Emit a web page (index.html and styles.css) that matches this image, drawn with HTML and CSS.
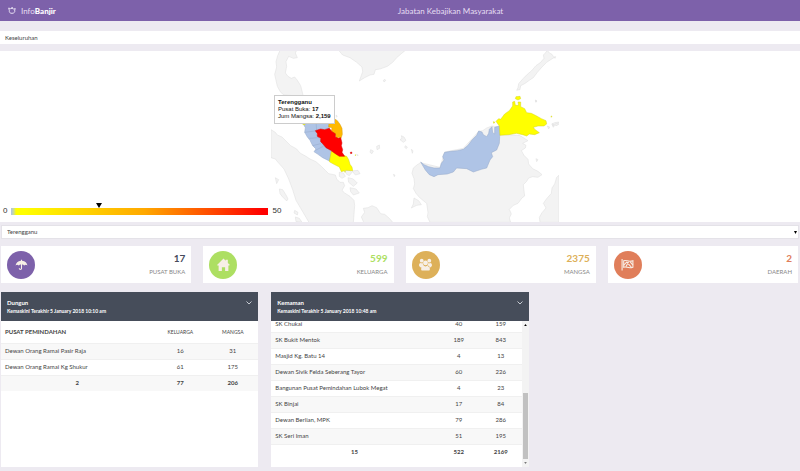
FILE: index.html
```html
<!DOCTYPE html>
<html lang="ms">
<head>
<meta charset="utf-8">
<meta name="viewport" content="width=device-width, initial-scale=1">
<title>InfoBanjir</title>
<link rel="stylesheet" href="styles.css">
</head>
<body>
<header class="topbar">
  <a class="brand" href="#">
    <svg class="brand-icon" viewBox="0 0 24 21" fill="none" stroke="currentColor" stroke-width="3" stroke-linejoin="round"><path d="M2 3l5 2c3-1 7-1 10 1l5-1-2 4c2 6-2 10-8 10S3 16 4 10z"/><path d="M9 3l6-1"/></svg>
    <span>Info<b>Banjir</b></span>
  </a>
  <h1 class="agency">Jabatan Kebajikan Masyarakat</h1>
</header>
<main>
  <h2 class="section-title">Keseluruhan</h2>
  <section class="map-panel">
    <svg class="map" viewBox="271 51 288 171" role="img" aria-label="Peta Malaysia">
      <g class="land" transform="translate(260 45) scale(.33333)">
        <path d="M60 16L53 32 48 50 50 66 44 88 48 106 52 124 62 142 72 150 100 152 131 158 126 138 122 122 112 106 104 96 94 100 84 94 76 84 80 64 78 50 86 34 100 40 112 38 106 24 110 16z"/>
        <path d="M33 254L46 262 52 270 66 276 78 288 92 302 110 312 120 324 138 334 150 342 168 350 184 364 196 376 206 386 226 390 230 402 240 412 250 412 254 422 246 436 254 444 270 454 282 466 284 482 280 534 148 534 128 500 108 466 98 434 86 402 72 372 54 352 46 342 33 338z"/>
        <path d="M236 16L248 30 270 38 290 52 306 66 308 80 298 108 314 98 330 90 342 88 346 74 360 72 382 64 398 52 410 38 424 26 436 16z"/>
        <path d="M58 432L68 434 78 450 84 462 80 468 68 456 60 446zM46 398L56 404 50 416zM104 496L114 502 112 510 102 504zM106 516L118 520 126 532 108 530z"/>
        <path d="M254 378L266 374 276 382 268 392 260 388zM276 378L294 376 300 386 286 390zM238 382L250 384 256 394 246 400 238 394zM264 398L280 402 292 414 280 424 266 412zM270 428L288 432 298 444 280 450 272 440z"/>
        <path d="M312 534L304 516 314 502 310 490 324 488 336 482 350 488 362 506 374 508 388 520 400 534z"/>
        <path d="M332 314l8 4-4 8-6-4zM350 304l8-4 1 10-8 4zM424 272l8 4 6 10-8 6-10-8 6-4zM436 302l6 4-3 5-5-4z"/>
        <path d="M370 106l5-3 2 4-5 4zM400 388l5 2-2 5zM228 210l4 3-3 4zM290 328l5 2-3 3z"/>
      </g>
      <g class="land" transform="translate(410 80) scale(.33333)">
        <path d="M32 248L22 254 10 264 6 280 12 296 14 312 10 326 18 340 28 352 40 362 50 370 52 384 54 398 52 410 60 427 302 427 298 414 304 402 298 388 310 376 324 370 336 354 344 348 342 332 340 314 350 304 356 294 368 290 384 292 396 284 384 274 368 266 356 252 354 238 342 226 334 212 346 204 348 196 338 190 354 182 342 174 328 166 268 164 260 140 246 138 230 144 218 152 206 154 160 205 104 216 90 262z"/>
        <path d="M447 286L440 292 434 312 426 324 424 340 410 356 400 370 408 384 396 398 388 412 390 427H447z"/>
        <path d="M12 354L26 362 34 374 20 376 4 384 10 372zM4 208l5 4-2 8zM378 236l6 3-4 6zM376 60l5 3-3 4z"/>
        <path d="M412 138l7 3-3 6zM426 132l8-4 12-2-2 8-10 2-4 6z"/>
      </g>
      <g class="land" transform="translate(400 45) scale(.33333)">
        <path d="M442 16L436 24 430 30 432 40 422 52 408 62 394 78 382 88 370 100 356 116 354 128 350 136 360 134 362 122 374 116 388 106 400 98 412 82 426 66 440 52 452 44 462 38 456 28 448 24z"/>
        <path d="M456 236l6 3-3 5zM464 238l8-4 4 4-8 4zM406 166l5 2-4 3zM462 36l5-1-2 5z"/>
      </g>
      <g transform="translate(260 45) scale(.33333)">
        <path class="area-none" d="M126 230L136 248 134 262 142 276 150 286 158 302 168 312 162 320 174 328 188 338 208 348 214 334 218 320 210 312 196 306 186 294 180 282 172 272 166 258 190 254 208 250 206 238 206 228z"/>
        <path class="area-line" d="M168 230L170 256M134 262L166 258M148 280L176 278M158 302L182 296M166 316L190 304M208 348L216 318"/>
        <path class="area-low" d="M126 236L138 232 134 240zM214 318L208 350 222 358 238 366 244 380 258 376 278 377 276 366 270 358 266 344 260 334 244 330 230 324z"/>
        <path class="area-mid" d="M208 220L220 219 232 227 240 238 246 250 247 268 243 280 236 276 230 284 226 268 214 260 216 248 206 246z"/>
        <path class="area-high" d="M166 257L182 252 194 254 208 250 216 260 226 266 226 276 234 280 242 278 246 294 244 302 248 314 246 322 254 334 238 334 226 326 212 316 198 308 188 296 182 290 182 280 172 274 172 266zM271 322L275 321 276 325 272 326z"/>
        <path class="area-low" d="M254 379L256 379 255 382zM286 329L288 330 286 332z"/>
      </g>
      <g transform="translate(410 80) scale(.33333)">
        <path class="area-none" d="M32 246L42 254 56 260 72 264 90 264 94 250 102 240 98 230 104 217 122 214 142 212 160 208 174 196 186 180 200 166 206 153 216 156 220 164 230 170 236 160 238 148 246 140 248 158 254 162 254 142 268 138 269 170 268 190 260 210 244 218 248 230 240 240 230 264 214 268 190 276 170 266 140 264 130 276 112 282 84 284 72 290 58 284 46 270z"/>
        <path class="area-low" d="M258 124L266 116 272 118 284 102 298 92 308 78 308 66 314 64 316 76 326 76 324 66 332 66 332 80 344 86 350 98 364 100 380 108 394 116 408 122 410 132 402 138 384 138 370 142 374 148 388 158 374 164 358 162 350 168 338 164 320 160 296 164 270 166 268 138zM318 50L330 49 332 56 324 60 316 56zM250 125l5 2-4 3zM423 108l3 1-2 3z"/>
      </g>
    </svg>
    <div class="legend">
      <span>0</span>
      <span class="legend-bar"><svg class="legend-mark" viewBox="0 0 6 5"><path d="M0 0h6L3 5z"/></svg></span>
      <span>50</span>
    </div>
    <div class="map-tip"><b>Terengganu</b><br>Pusat Buka: <b>17</b><br>Jum Mangsa: <b>2,159</b></div>
  </section>

  <div class="state">
    <select class="state-select" aria-label="Negeri"><option>Terengganu</option></select>
    <svg class="state-arrow" viewBox="0 0 4 4"><path d="M0 0h4L2 4z"/></svg>
  </div>

  <section class="stats">
    <article class="stat violet">
      <span class="stat-icon"><svg viewBox="0 0 24 24" fill="currentColor"><path d="M11 3h2v2c6 .5 9 4 10 9-2-2-4-2-6 0-1-1-2-2-4-2v7c0 4-6 4-6 0h2c0 2 2 2 2 0v-7c-2 0-3 1-4 2-2-2-4-2-6 0C2 9 5 5.500 11 5z"/></svg></span>
      <div class="stat-text"><strong>17</strong><span>PUSAT BUKA</span></div>
    </article>
    <article class="stat green">
      <span class="stat-icon"><svg viewBox="0 0 24 24" fill="currentColor"><path d="M12 1l4 4V3h4v6l4 4-2 1h-1v10h-6v-7H9v7H3V14H1l-1-1z"/></svg></span>
      <div class="stat-text"><strong>599</strong><span>KELUARGA</span></div>
    </article>
    <article class="stat gold">
      <span class="stat-icon"><svg viewBox="0 0 24 24" fill="currentColor"><circle cx="5" cy="5" r="3.500"/><circle cx="19" cy="5" r="3.500"/><circle cx="12" cy="9" r="4.500"/><path d="M0 14c0-3 1-5 3-5 1 1 3 1 4 0 0 3 1 4 2 5l-4 3H2zM24 14c0-3-1-5-3-5-1 1-3 1-4 0 0 3-1 4-2 5l4 3h3zM4 21c0-4 1-7 4-7 2 2 6 2 8 0 3 0 4 3 4 7 0 1-1 2-2 2H6c-1 0-2-1-2-2z"/></svg></span>
      <div class="stat-text"><strong>2375</strong><span>MANGSA</span></div>
    </article>
    <article class="stat orange">
      <span class="stat-icon"><svg viewBox="0 0 24 24" fill="none" stroke="currentColor" stroke-width="2"><path d="M2 2v21M5 5c5-2 8 3 17 0v12c-9 3-12-2-17 0z"/><path d="M5 13l6-6M9 16l5-9M11 8l8 9M17 7l5 6"/></svg></span>
      <div class="stat-text"><strong>2</strong><span>DAERAH</span></div>
    </article>
  </section>

  <section class="districts">
    <article class="district">
      <header class="district-head">
        <div><h3>Dungun</h3><p>Kemaskini Terakhir 5 January 2018 10:10 am</p></div>
        <button class="toggle" aria-label="Tutup Dungun"><svg viewBox="0 0 6 4" fill="none" stroke="currentColor"><path d="M.5 .5L3 3 5.500 .5"/></svg></button>
      </header>
      <div class="district-body">
        <table class="centres">
          <colgroup><col><col class="col-family"><col class="col-victim"></colgroup>
          <thead><tr><th>PUSAT PEMINDAHAN</th><th>KELUARGA</th><th>MANGSA</th></tr></thead>
          <tbody>
            <tr class="shade"><td>Dewan Orang Ramai Pasir Raja</td><td>16</td><td>31</td></tr>
            <tr><td>Dewan Orang Ramai Kg Shukur</td><td>61</td><td>175</td></tr>
          </tbody>
          <tfoot><tr class="shade"><td>2</td><td>77</td><td>206</td></tr></tfoot>
        </table>
      </div>
    </article>
    <article class="district">
      <header class="district-head">
        <div><h3>Kemaman</h3><p>Kemaskini Terakhir 5 January 2018 10:48 am</p></div>
        <button class="toggle" aria-label="Tutup Kemaman"><svg viewBox="0 0 6 4" fill="none" stroke="currentColor"><path d="M.5 .5L3 3 5.500 .5"/></svg></button>
      </header>
      <div class="district-body scrolled">
        <div class="scroll-view">
          <table class="centres">
            <colgroup><col><col class="col-narrow"><col class="col-narrow"></colgroup>
            <tbody>
              <tr><td>SK Chukai</td><td>40</td><td>159</td></tr>
              <tr class="shade"><td>SK Bukit Mentok</td><td>189</td><td>843</td></tr>
              <tr><td>Masjid Kg. Batu 14</td><td>4</td><td>13</td></tr>
              <tr class="shade"><td>Dewan Sivik Felda Seberang Tayor</td><td>60</td><td>226</td></tr>
              <tr><td>Bangunan Pusat Pemindahan Lubok Megat</td><td>4</td><td>23</td></tr>
              <tr class="shade"><td>SK Binjai</td><td>17</td><td>84</td></tr>
              <tr><td>Dewan Berlian, MPK</td><td>79</td><td>286</td></tr>
              <tr class="shade"><td>SK Seri Iman</td><td>51</td><td>195</td></tr>
            </tbody>
            <tfoot><tr><td>15</td><td>522</td><td>2169</td></tr></tfoot>
          </table>
        </div>
        <div class="scrollbar">
          <svg viewBox="0 0 4 3"><path d="M0 3h4L2 0z"/></svg>
          <span class="scroll-track"><span class="scroll-thumb"></span></span>
          <svg viewBox="0 0 4 3"><path d="M0 0h4L2 3z" opacity=".5"/></svg>
        </div>
      </div>
    </article>
  </section>
</main>
</body>
</html>
```
FILE: styles.css
```css
* { box-sizing: border-box; }
body {
  margin: 0;
  background: #edeaf1;
  color: #444;
  font: 6px/10px Lato, "Liberation Sans", sans-serif;
}
h1, h2, h3, p { margin: 0; font-weight: 400; }

.topbar {
  display: grid;
  grid-template-columns: 1fr auto 1fr;
  align-items: center;
  height: 21px;
  padding: 0 8px;
  background: #7d61aa;
  color: #e6def2;
}
.brand {
  display: flex;
  align-items: center;
  gap: 5px;
  color: inherit;
  font-size: 8px;
  text-decoration: none;
}
.brand b { color: #fff; font-weight: 900; }
.brand-icon { width: 8px; height: 7px; }
.agency { padding-left: 101px; font-size: 8px; }

.section-title {
  height: 13px;
  margin: 10px 0 7px;
  padding-left: 5px;
  background: #fff;
  font-size: 6px;
  line-height: 14px;
}

.map-panel {
  position: relative;
  height: 171px;
  background: #fff;
  overflow: hidden;
  font-family: "Liberation Sans", sans-serif;
}
.map { display: block; width: 288px; height: 171px; margin-left: 271px; }
.land { fill: #f3f3f3; stroke: #dcdcdc; stroke-width: 1.5; stroke-linejoin: round; }
.area-none { fill: #afc4e6; stroke: #93a7c8; stroke-width: 1.5; }
.area-line { fill: none; stroke: #93a7c8; stroke-width: 1.5; }
.area-low { fill: #ff0; stroke: #d5d520; stroke-width: 1.5; }
.area-mid { fill: #ffb900; stroke: #d79b10; stroke-width: 1.5; }
.area-high { fill: #f00; stroke: #d00000; stroke-width: 1.5; }

.legend {
  position: absolute;
  left: 3px;
  bottom: 6px;
  display: flex;
  align-items: center;
  gap: 4px;
  color: #333;
  font-size: 8px;
}
.legend-bar {
  position: relative;
  width: 257px;
  height: 7px;
  background: linear-gradient(90deg, #afc4e6 0, #c8dba0 1%, #ff0 2%, #ff0 5%, #ffa800 52%, #f00 98%);
}
.legend-mark { position: absolute; left: 33%; bottom: 7px; width: 6px; height: 5px; }
.map-tip {
  position: absolute;
  left: 274px;
  top: 44px;
  padding: 3px;
  border: 1px solid #ccc;
  background: #fff;
  color: #111;
  font-size: 6px;
  line-height: 7px;
  white-space: nowrap;
}

.state { position: relative; margin: 3px 1px 7px; }
.state-select {
  display: block;
  width: 100%;
  height: 14px;
  padding: 0 5px;
  border: 1px solid #e4e2e8;
  border-radius: 0;
  background: #fff;
  color: #444;
  font: inherit;
  appearance: none;
}
.state-arrow { position: absolute; right: 2px; top: 6px; width: 3px; height: 3px; }

.stats {
  display: grid;
  grid-template-columns: repeat(4, 1fr);
  gap: 12px;
  margin: 0 2px 9px 1px;
}
.stat {
  display: flex;
  align-items: center;
  justify-content: space-between;
  height: 37px;
  padding: 0 6px;
  background: #fff;
}
.stat-icon {
  display: grid;
  place-items: center;
  width: 28px;
  height: 28px;
  border-radius: 50%;
  background: var(--tone);
  color: #f7efe6;
}
.stat-icon svg { width: 13px; height: 13px; }
.stat-text { text-align: right; color: #888; }
.stat-text strong {
  display: block;
  margin-bottom: 3px;
  color: var(--ink, var(--tone));
  font-size: 10px;
  line-height: 12px;
}
.stat-text span { display: block; }
.violet { --tone: #7d61aa; --ink: #454a5b; }
.green { --tone: #addf62; }
.gold { --tone: #ddb059; }
.orange { --tone: #e07e5a; }

.districts {
  display: grid;
  grid-template-columns: repeat(3, 1fr);
  gap: 13px;
  margin: 0 1px;
}
.district { background: #fff; }
.district-head {
  display: flex;
  justify-content: space-between;
  align-items: flex-start;
  height: 29px;
  padding: 6px 6px 0;
  background: #464d5a;
  color: #fff;
}
.district-head h3 { font-size: 6px; line-height: 9px; font-weight: 700; }
.district-head p { font-size: 5px; line-height: 8px; font-weight: 700; }
.toggle { padding: 3px 0; border: 0; background: none; color: #c6cad1; line-height: 0; }
.toggle svg { width: 6px; height: 4px; }
.district-body { height: 146px; }

.centres { width: 100%; border-collapse: collapse; table-layout: fixed; }
.centres th, .centres td { height: 16px; padding: 0 4px; border-top: 1px solid #f0f0f0; text-align: center; }
.centres tbody td:first-child, .centres th:first-child { text-align: left; }
.centres th { height: 22px; border: 0; font-size: 5px; font-weight: 400; }
.centres th:first-child { font-size: 6px; font-weight: 700; }
.centres tfoot td { font-weight: 700; }
.shade { background: #f8f8f8; }
.col-family { width: 54px; }
.col-victim { width: 51px; }
.col-narrow { width: 42px; }

.scrolled { display: flex; }
.scroll-view {
  flex: 1;
  display: flex;
  flex-direction: column;
  justify-content: flex-end;
  padding-bottom: 7px;
  overflow: hidden;
}
.scrollbar {
  display: flex;
  flex-direction: column;
  align-items: center;
  gap: 3px;
  width: 7px;
  padding: 3px 0;
  background: #f3f3f3;
}
.scrollbar svg { width: 3px; height: 2px; }
.scroll-track { display: flex; flex: 1; align-items: flex-end; }
.scroll-thumb { width: 5px; height: 51%; background: #c1c1c1; }
```
